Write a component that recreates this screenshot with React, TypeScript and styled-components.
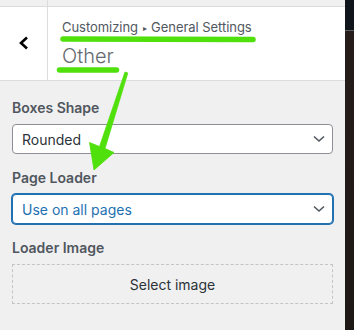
import React from "react";
import styled, { createGlobalStyle } from "styled-components";

const Global = createGlobalStyle`
  html, body { margin: 0; padding: 0; background: #f0f0f1; }
  body { width: 354px; height: 330px; overflow: hidden; font-family: Inter, "Noto Sans", sans-serif; -webkit-font-smoothing: antialiased; }
  * { box-sizing: border-box; }
`;

const Page = styled.div`
  position: relative;
  display: flex;
  width: 354px;
  height: 330px;
`;

const Panel = styled.div`
  width: 345px;
  display: flex;
  flex-direction: column;
  background: #f0f0f1;
`;

const Strip = styled.div`
  width: 9px;
  display: flex;
  flex-direction: column;
`;

const StripTop = styled.div`
  height: 31px;
  background: #0f151b;
  border-bottom: 1px solid #5a5f64;
`;

const StripBottom = styled.div`
  flex: 1;
  background: linear-gradient(#261d1a, #1d1816);
`;

const TopBar = styled.div`
  height: 7px;
  display: flex;
  border-bottom: 1px solid #dcdcde;
`;

const TopCell = styled.div`
  width: 48px;
  border-right: 1px solid #dcdcde;
`;

const Header = styled.div`
  height: 74px;
  display: flex;
  background: #fff;
  border-bottom: 1px solid #dcdcde;
`;

const Back = styled.div`
  width: 48px;
  border-right: 1px solid #dcdcde;
  display: flex;
  align-items: center;
  justify-content: center;
  padding-left: 1px;
  padding-bottom: 2px;
`;

const Titles = styled.div`
  display: flex;
  flex-direction: column;
  padding: 11px 0 0 14px;
`;

const Crumb = styled.div`
  font-size: 13px;
  line-height: 18px;
  color: #50575e;
  letter-spacing: -0.05px;
`;

const Sep = styled.span`
  font-size: 8px;
  vertical-align: 1px;
  margin: 0 1px;
`;

const Title = styled.div`
  margin-top: 6px;
  font-size: 20px;
  line-height: 26px;
  font-weight: 300;
  color: #646970;
`;

const Content = styled.div`
  display: flex;
  flex-direction: column;
  padding: 17px 12px 0 12px;
`;

const Label = styled.div`
  font-size: 14px;
  line-height: 20px;
  font-weight: 600;
  color: #50575e;
  margin-bottom: 6px;
`;

const Select = styled.div<{ $focus?: boolean }>`
  height: 30px;
  display: flex;
  align-items: center;
  justify-content: space-between;
  padding: 0 7px 0 9px;
  background: #fff;
  border: 1px solid ${(p) => (p.$focus ? "#2271b1" : "#8c8f94")};
  box-shadow: ${(p) => (p.$focus ? "0 0 0 1px #2271b1" : "none")};
  border-radius: 4px;
  font-size: 14px;
  color: ${(p) => (p.$focus ? "#2271b1" : "#2c3338")};
  margin-bottom: 14px;
`;

const Dashed = styled.div`
  height: 40px;
  display: flex;
  align-items: center;
  justify-content: center;
  border: 1px dashed #c3c4c7;
  font-size: 14px;
  color: #2c3338;
`;

const Overlay = styled.svg`
  position: absolute;
  left: 0;
  top: 0;
  pointer-events: none;
`;

const Chevron = () => (
  <svg width="12" height="8" viewBox="0 0 12 8">
    <polyline points="1,1.5 6,6 11,1.5" fill="none" stroke="#50575e" strokeWidth="1.6" />
  </svg>
);

export default function App() {
  return (
    <>
      <Global />
      <Page>
        <Panel>
          <TopBar>
            <TopCell />
          </TopBar>
          <Header>
            <Back>
              <svg width="10" height="14" viewBox="0 0 10 14">
                <polyline points="8,1.5 2,7 8,12.5" fill="none" stroke="#000" strokeWidth="2.6" />
              </svg>
            </Back>
            <Titles>
              <Crumb>
                Customizing <Sep>▸</Sep> General Settings
              </Crumb>
              <Title>Other</Title>
            </Titles>
          </Header>
          <Content>
            <Label>Boxes Shape</Label>
            <Select>
              Rounded
              <Chevron />
            </Select>
            <Label>Page Loader</Label>
            <Select $focus>
              Use on all pages
              <Chevron />
            </Select>
            <Label>Loader Image</Label>
            <Dashed>Select image</Dashed>
          </Content>
        </Panel>
        <Strip>
          <StripTop />
          <StripBottom />
        </Strip>
        <Overlay width="354" height="330" viewBox="0 0 354 330">
          <line x1="63" y1="39" x2="253" y2="39.5" stroke="#50e00c" strokeWidth="5.5" strokeLinecap="round" />
          <line x1="59.5" y1="70" x2="116.5" y2="70" stroke="#50e00c" strokeWidth="5.5" strokeLinecap="round" />
          <polygon
            points="125,72 127.8,73 105,148.5 114,152.5 94,170 89.5,142.5 99.5,146.5"
            fill="#50e00c"
            stroke="#50e00c"
            strokeWidth="0.8"
            strokeLinejoin="round"
          />
        </Overlay>
      </Page>
    </>
  );
}
